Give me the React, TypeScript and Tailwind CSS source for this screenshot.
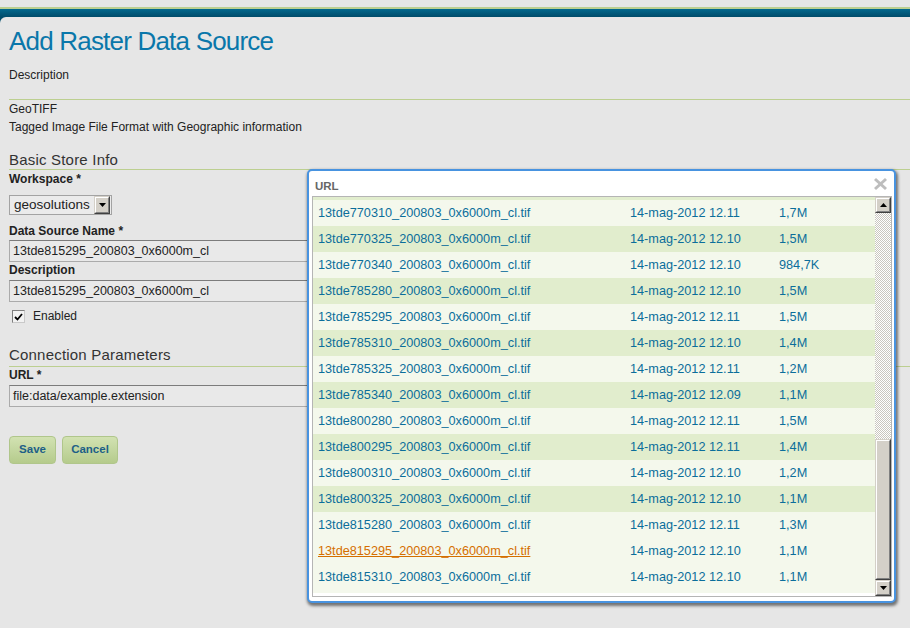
import React from 'react';

const rows: [string, string, string][] = [
  ['13tde770310_200803_0x6000m_cl.tif', '14-mag-2012 12.11', '1,7M'],
  ['13tde770325_200803_0x6000m_cl.tif', '14-mag-2012 12.10', '1,5M'],
  ['13tde770340_200803_0x6000m_cl.tif', '14-mag-2012 12.10', '984,7K'],
  ['13tde785280_200803_0x6000m_cl.tif', '14-mag-2012 12.10', '1,5M'],
  ['13tde785295_200803_0x6000m_cl.tif', '14-mag-2012 12.11', '1,5M'],
  ['13tde785310_200803_0x6000m_cl.tif', '14-mag-2012 12.10', '1,4M'],
  ['13tde785325_200803_0x6000m_cl.tif', '14-mag-2012 12.11', '1,2M'],
  ['13tde785340_200803_0x6000m_cl.tif', '14-mag-2012 12.09', '1,1M'],
  ['13tde800280_200803_0x6000m_cl.tif', '14-mag-2012 12.11', '1,5M'],
  ['13tde800295_200803_0x6000m_cl.tif', '14-mag-2012 12.11', '1,4M'],
  ['13tde800310_200803_0x6000m_cl.tif', '14-mag-2012 12.10', '1,2M'],
  ['13tde800325_200803_0x6000m_cl.tif', '14-mag-2012 12.10', '1,1M'],
  ['13tde815280_200803_0x6000m_cl.tif', '14-mag-2012 12.11', '1,3M'],
  ['13tde815295_200803_0x6000m_cl.tif', '14-mag-2012 12.10', '1,1M'],
  ['13tde815310_200803_0x6000m_cl.tif', '14-mag-2012 12.10', '1,1M']
];

const HOVER = 13;

// classic 3D scrollbar button
const ScrollButton = ({ up }: { up?: boolean }) => (
  <div className="h-[16px] w-[16px] shrink-0 border border-t-[#d4d0c8] border-l-[#d4d0c8] border-r-[#404040] border-b-[#404040] bg-[#d4d0c8]">
    <div className="flex h-full w-full items-center justify-center border border-t-white border-l-white border-r-[#808080] border-b-[#808080]">
      <svg width="7" height="4" viewBox="0 0 7 4">
        {up ? (
          <polygon points="3.5,0 7,4 0,4" fill="#000" />
        ) : (
          <polygon points="0,0 7,0 3.5,4" fill="#000" />
        )}
      </svg>
    </div>
  </div>
);

const TextInput = ({ value }: { value: string }) => (
  <div className="flex h-[22px] w-[420px] items-center border border-[#ababab] border-t-[#7c7c7c] bg-[#e9e9e9] pl-[3px] pt-[1px] text-[12.5px] text-[#222]">
    {value}
  </div>
);

const Label = ({ children }: { children: React.ReactNode }) => (
  <div className="h-[14px] text-[12px] font-bold leading-[14px] text-[#222]">
    {children}
  </div>
);

const UrlDialog = () => (
  <div className="absolute left-[307px] top-[169px] flex h-[434px] w-[589px] flex-col rounded-[5px] border-2 border-[#4893e0] bg-white shadow-[1px_2px_3px_1px_rgba(0,0,0,0.5)]">
    {/* header */}
    <div className="flex h-[25px] shrink-0 items-start justify-between pl-[6px] pr-[6px] pt-[8px]">
      <span className="text-[11.5px] font-bold leading-[14px] text-[#666]">URL</span>
      <svg width="15" height="14" viewBox="0 0 15 14" className="-mt-[2px]">
        <line x1="2" y1="2" x2="13" y2="12" stroke="#bdbdbd" strokeWidth="3" />
        <line x1="13" y1="2" x2="2" y2="12" stroke="#bdbdbd" strokeWidth="3" />
      </svg>
    </div>

    {/* file list */}
    <div className="ml-[3px] mr-[2px] flex h-[401px] shrink-0 border border-[#b5b5b5]">
      <div className="flex flex-1 flex-col overflow-hidden pb-[3px]">
        <div className="h-[3px] shrink-0 bg-[#e1edcd]" />
        {rows.map(([name, date, size], i) => {
          const hovered = i === HOVER;
          const bg = hovered || i % 2 === 0 ? 'bg-[#f4f8ec]' : 'bg-[#e1edcd]';
          return (
            <div
              key={name}
              className={`grid h-[26px] shrink-0 grid-cols-[312px_149px_1fr] items-center pl-[5px] pt-[2px] text-[12.7px] text-[#0b6e9b] ${bg}`}
            >
              <span className={hovered ? 'text-[#d46f00] underline' : ''}>{name}</span>
              <span>{date}</span>
              <span>{size}</span>
            </div>
          );
        })}
        <div className="h-[3px] shrink-0 bg-[#f4f8ec]" />
      </div>

      {/* scrollbar */}
      <div className="flex w-[16px] shrink-0 flex-col">
        <ScrollButton up />
        <div className="flex-1 bg-[repeating-conic-gradient(#ffffff_0%_25%,#c9c6bf_0%_50%)] bg-[length:2px_2px]" />
        <div className="h-[141px] shrink-0 border border-t-[#d4d0c8] border-l-[#d4d0c8] border-r-[#404040] border-b-[#404040] bg-[#d4d0c8]">
          <div className="h-full w-full border border-t-white border-l-white border-r-[#808080] border-b-[#808080]" />
        </div>
        <ScrollButton />
      </div>
    </div>
  </div>
);

export default function App() {
  return (
    <div className="relative min-h-[628px] w-[910px] bg-[#e6e6e6] font-['Liberation_Sans',Arial,sans-serif] text-[#222]">
      {/* top bars */}
      <div className="h-[7px] bg-[#e6e6e6]" />
      <div className="h-[2px] bg-[#bccf90]" />
      <div className="h-[8px] bg-gradient-to-b from-[#03698f] to-[#004c6a]" />

      <div className="bg-[#004c6a]">
        <div className="min-h-[611px] rounded-tl-[6px] bg-[#e6e6e6] pl-[9px]">
          <h1 className="pt-[8px] text-[26px] leading-[32px] tracking-[-0.8px] text-[#0a77aa]">
            Add Raster Data Source
          </h1>
          <div className="mt-[11px] text-[12px] leading-[14px]">Description</div>

          <div className="mt-[17px] border-t border-[#bccf90] text-[12px] leading-[18px]">
            <div>GeoTIFF</div>
            <div>Tagged Image File Format with Geographic information</div>
          </div>

          {/* Basic Store Info */}
          <div className="mt-[15px] h-[19px] border-b border-[#bccf90] text-[15px] leading-[18px] tracking-[0.2px] text-[#333]">
            Basic Store Info
          </div>
          <div className="mt-[2px]">
            <Label>Workspace *</Label>
          </div>
          <div className="mt-[9px] flex h-[20px] w-[103px] items-center justify-between border border-[#a3a3a3] bg-[#ebebeb] pl-[4px] pr-[1px]">
            <span className="text-[13.5px] leading-[16px]">geosolutions</span>
            <div className="h-[18px] w-[16px] border border-t-[#d4d0c8] border-l-[#d4d0c8] border-r-[#404040] border-b-[#404040] bg-[#d4d0c8]">
              <div className="flex h-full w-full items-center justify-center border border-t-white border-l-white border-r-[#808080] border-b-[#808080]">
                <svg width="7" height="4" viewBox="0 0 7 4">
                  <polygon points="0,0 7,0 3.5,4" fill="#000" />
                </svg>
              </div>
            </div>
          </div>

          <div className="mt-[9px]">
            <Label>Data Source Name *</Label>
          </div>
          <div className="mt-[2px]">
            <TextInput value="13tde815295_200803_0x6000m_cl" />
          </div>
          <div className="mt-[1px]">
            <Label>Description</Label>
          </div>
          <div className="mt-[3px]">
            <TextInput value="13tde815295_200803_0x6000m_cl" />
          </div>

          <div className="mt-[8px] flex h-[13px] items-center pl-[3px]">
            <div className="flex h-[13px] w-[13px] items-center justify-center border border-[#7f7f7f] border-b-[#c9c9c9] border-r-[#c9c9c9] bg-[#f2f2f2]">
              <svg width="9" height="8" viewBox="0 0 9 8">
                <polyline points="1,4 3.5,6.5 8,1" fill="none" stroke="#000" strokeWidth="1.8" />
              </svg>
            </div>
            <span className="ml-[8px] text-[12px] leading-[13px]">Enabled</span>
          </div>

          {/* Connection Parameters */}
          <div className="mt-[23px] h-[21px] border-b border-[#bccf90] pb-[2px] text-[15px] leading-[18px] tracking-[0.2px] text-[#333]">
            Connection Parameters
          </div>
          <div className="mt-[1px]">
            <Label>URL *</Label>
          </div>
          <div className="mt-[3px]">
            <TextInput value="file:data/example.extension" />
          </div>

          <div className="mt-[29px] flex gap-[6px]">
            <button className="h-[28px] w-[47px] rounded-[4px] border border-[#b0c68b] bg-gradient-to-b from-[#d2e2b2] to-[#b5cb8c] text-[11.5px] font-bold text-[#1d5f87]">
              Save
            </button>
            <button className="h-[28px] w-[56px] rounded-[4px] border border-[#b0c68b] bg-gradient-to-b from-[#d2e2b2] to-[#b5cb8c] text-[11.5px] font-bold text-[#1d5f87]">
              Cancel
            </button>
          </div>
        </div>
      </div>

      <UrlDialog />
    </div>
  );
}
